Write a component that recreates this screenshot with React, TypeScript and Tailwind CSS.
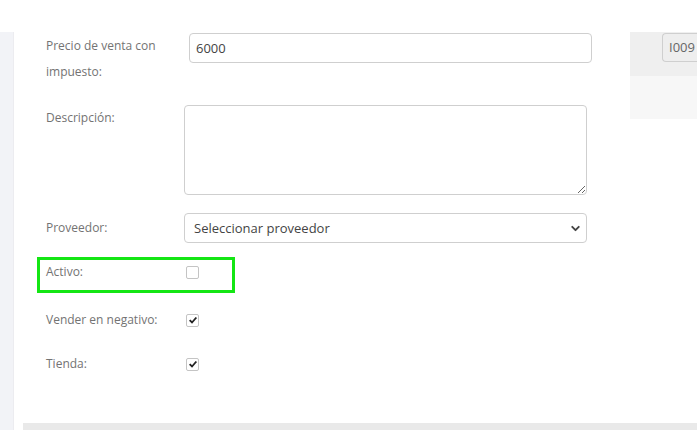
import { ChevronDown } from "lucide-react";

function Tick({ checked }: { checked: boolean }) {
  return (
    <span className="flex h-[13px] w-[13px] items-center justify-center rounded-[2px] border border-[#c4c4c4] bg-white">
      {checked && (
        <svg viewBox="0 0 12 12" className="h-[10px] w-[10px]">
          <path d="M2 6.2 L4.8 9 L10 3" fill="none" stroke="#222" strokeWidth="2.2" />
        </svg>
      )}
    </span>
  );
}

const label = "w-[140px] shrink-0 text-[12px] leading-[26px] text-[#737373]";

export default function App() {
  return (
    <div className="flex h-[430px] w-[697px] flex-col overflow-hidden bg-white font-['Open_Sans',sans-serif]">
      <div className="h-[32px] shrink-0 bg-white" />

      <div className="flex flex-1">
        <aside className="w-[14px] shrink-0 border-r border-[#ececf0] bg-[#f2f3f7]" />

        <main className="flex flex-1 flex-col">
          <div className="flex flex-1">
            <form className="flex w-[616px] flex-col pl-[32px] pt-[1px]">
              <div className="flex items-start">
                <label className={label}>
                  Precio de venta con
                  <br />
                  impuesto:
                </label>
                <input
                  defaultValue="6000"
                  className="ml-[3px] h-[30px] w-[403px] rounded-[4px] border border-[#cfcfcf] px-[6px] text-[13px] text-[#444] outline-none"
                />
              </div>

              <div className="mt-[20px] flex items-start">
                <label className={label}>Descripción:</label>
                <textarea className="-ml-[2px] h-[90px] w-[403px] rounded-[4px] border border-[#cfcfcf] outline-none" />
              </div>

              <div className="mt-[18px] flex items-center">
                <label className={label}>Proveedor:</label>
                <div className="-ml-[2px] flex h-[30px] w-[403px] items-center justify-between rounded-[4px] border border-[#cfcfcf] pl-[9px] pr-[4px] pt-[1px] text-[13px] text-[#444]">
                  <span>Seleccionar proveedor</span>
                  <ChevronDown size={13} strokeWidth={3.5} className="text-[#444]" />
                </div>
              </div>

              <div className="mt-[14px] -ml-[9px] flex h-[36px] w-[198px] items-center border-[3px] border-[#14e614] pb-[6px] pl-[6px]">
                <label className={label}>Activo:</label>
                <Tick checked={false} />
              </div>

              <div className="mt-[14px] flex h-[26px] items-center">
                <label className={label}>Vender en negativo:</label>
                <Tick checked />
              </div>

              <div className="mt-[18px] flex h-[26px] items-center">
                <label className={label}>Tienda:</label>
                <Tick checked />
              </div>
            </form>

            <div className="flex flex-1 flex-col">
              <div className="flex h-[44px] items-start bg-[#efefef] pl-[32px] pt-[1px]">
                <div className="flex h-[29px] flex-1 items-center rounded-l-[4px] border border-r-0 border-[#cfcfcf] bg-[#eeeeee] pl-[6px] text-[13px] text-[#666]">
                  I009
                </div>
              </div>
              <div className="h-[43px] bg-[#f7f7f7]" />
            </div>
          </div>

          <div className="ml-[9px] h-[7px] bg-[#e9e9e9]" />
        </main>
      </div>
    </div>
  );
}
